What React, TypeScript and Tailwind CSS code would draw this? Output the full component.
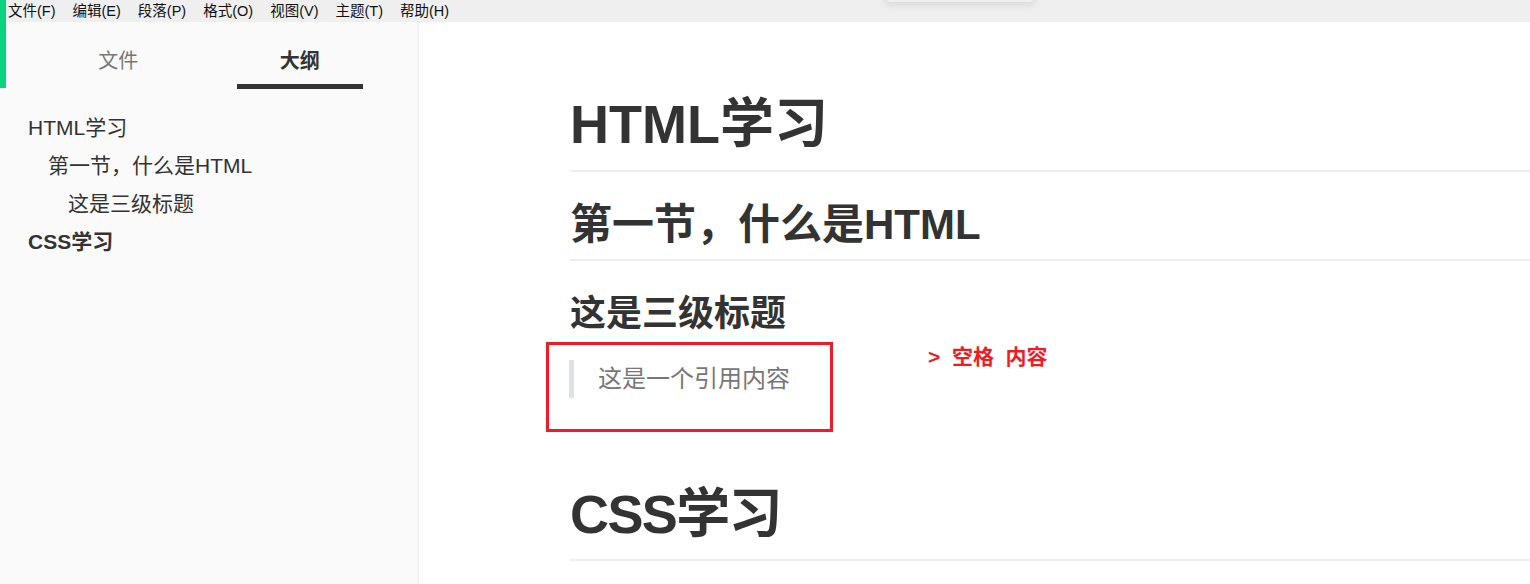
import React from 'react';

const menus = ['文件(F)', '编辑(E)', '段落(P)', '格式(O)', '视图(V)', '主题(T)', '帮助(H)'];

const outline = [
  { text: 'HTML学习', indent: 'pl-[28px]', bold: false },
  { text: '第一节，什么是HTML', indent: 'pl-[48px]', bold: false },
  { text: '这是三级标题', indent: 'pl-[68px]', bold: false },
  { text: 'CSS学习', indent: 'pl-[28px]', bold: true },
];

export default function App() {
  return (
    <div
      className="relative w-[1530px] h-[584px] overflow-hidden bg-white text-[#333]"
      style={{ fontFamily: '"Liberation Sans", "Noto Sans CJK SC", sans-serif' }}
    >
      {/* window edge accent */}
      <div className="absolute left-0 top-0 w-[6px] h-[88px] bg-[#0ad27f] z-10" />
      {/* faint shadow of a hidden popup */}
      <div className="absolute left-[885px] top-[-14px] w-[150px] h-[16px] rounded-md bg-[#efefef] shadow-[0_2px_8px_rgba(0,0,0,0.12)]" />

      {/* menu bar */}
      <div className="flex items-center h-[22px] bg-[#efefef] pl-[8px] gap-[17px] text-[14.5px] text-[#111]">
        {menus.map((m) => (
          <span key={m} className="leading-[22px]">{m}</span>
        ))}
      </div>

      <div className="flex h-[562px]">
        {/* sidebar */}
        <aside className="w-[419px] shrink-0 bg-[#fafafa] border-r border-[#ececec]">
          <div className="flex justify-evenly">
            <div className="w-[126px] flex flex-col items-center pt-[25px]">
              <span className="text-[20px] leading-[28px] text-[#777]">文件</span>
              <div className="mt-[9px] h-[5px] w-full" />
            </div>
            <div className="w-[126px] flex flex-col items-center pt-[25px]">
              <span className="text-[20px] leading-[28px] font-bold text-[#333]">大纲</span>
              <div className="mt-[9px] h-[5px] w-full bg-[#333]" />
            </div>
          </div>
          <ul className="mt-[20px]">
            {outline.map((o) => (
              <li
                key={o.text}
                className={`${o.indent} text-[21px] leading-[38px] ${o.bold ? 'font-bold text-[#333]' : 'text-[#333]'}`}
              >
                {o.text}
              </li>
            ))}
          </ul>
        </aside>

        {/* editor */}
        <main className="flex-1 pl-[151px]">
          <h1 className="mt-[70px] text-[54px] leading-[65px] font-bold pb-[13px] border-b-2 border-[#eeeeee]">
            HTML学习
          </h1>
          <h2 className="mt-[28px] text-[42px] leading-[50px] font-bold pb-[9px] border-b-2 border-[#eeeeee]">
            第一节，什么是HTML
          </h2>
          <h3 className="mt-[31px] text-[36px] leading-[43px] font-bold">这是三级标题</h3>

          <div className="flex items-start mt-[7px]">
            <div className="-ml-[24px] w-[287px] h-[90px] border-[3px] border-[#ee1c25] pt-[15px] pl-[20px]">
              <blockquote className="border-l-[5px] border-[#dfe2e5] pl-[24px] text-[24px] leading-[38px] text-[#777]">
                这是一个引用内容
              </blockquote>
            </div>
            <span className="ml-[95px] mt-[1px] text-[21px] leading-[28px] font-bold text-[#ee1c25] whitespace-pre">
              {'>  空格  内容'}
            </span>
          </div>

          <h1 className="mt-[50px] text-[54px] leading-[65px] font-bold tracking-[-0.03em] pb-[12px] border-b-2 border-[#eeeeee]">
            CSS学习
          </h1>
        </main>
      </div>
    </div>
  );
}
